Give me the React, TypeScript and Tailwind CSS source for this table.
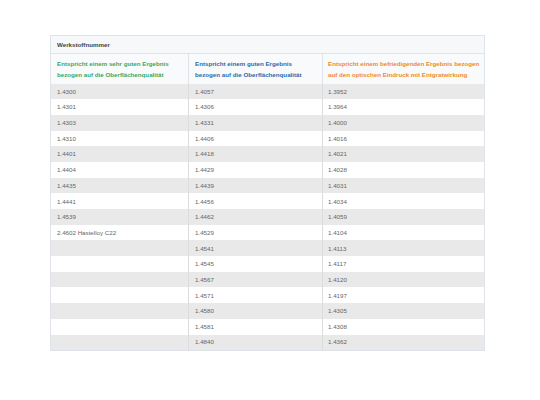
import React from "react";

const rows: [string, string, string][] = [
    ["1.4300", "1.4057", "1.3952"],
    ["1.4301", "1.4306", "1.3964"],
    ["1.4303", "1.4331", "1.4000"],
    ["1.4310", "1.4406", "1.4016"],
    ["1.4401", "1.4418", "1.4021"],
    ["1.4404", "1.4429", "1.4028"],
    ["1.4435", "1.4439", "1.4031"],
    ["1.4441", "1.4456", "1.4034"],
    ["1.4539", "1.4462", "1.4059"],
    ["2.4602 Hastelloy C22", "1.4529", "1.4104"],
    ["", "1.4541", "1.4113"],
    ["", "1.4545", "1.4117"],
    ["", "1.4567", "1.4120"],
    ["", "1.4571", "1.4197"],
    ["", "1.4580", "1.4305"],
    ["", "1.4581", "1.4308"],
    ["", "1.4840", "1.4362"],
];

export default function App() {
    return (
        <div
            className="w-[540px] h-[400px] bg-white pt-[35px] pl-[50px]"
            style={{ fontFamily: '"Liberation Sans", Arial, sans-serif' }}
        >
            <table className="w-[434px] border-collapse border border-[#dfe4ea] text-[6.2px] table-fixed">
                <colgroup>
                    <col className="w-[138px]" />
                    <col className="w-[134px]" />
                    <col className="w-[162px]" />
                </colgroup>
                <thead>
                    <tr className="h-[18px] bg-[#f6f8fa] border-b border-[#dfe4ea]">
                        <th colSpan={3} className="text-left font-bold text-[#444] px-[6px]">
                            Werkstoffnummer
                        </th>
                    </tr>
                    <tr className="h-[30px] bg-[#f8fafc] font-bold leading-[11px] whitespace-nowrap">
                        <th className="text-left text-[#3aa95c] px-[6px] font-bold">
                            Entspricht einem sehr guten Ergebnis
                            <br />
                            bezogen auf die Oberflächenqualität
                        </th>
                        <th className="text-left text-[#2d6aa6] px-[6px] font-bold border-l border-[#dfe4ea]">
                            Entspricht einem guten Ergebnis
                            <br />
                            bezogen auf die Oberflächenqualität
                        </th>
                        <th className="text-left text-[#f0892a] px-[5px] font-bold border-l border-[#dfe4ea]">
                            Entspricht einem befriedigenden Ergebnis bezogen
                            <br />
                            auf den optischen Eindruck mit Entgratwirkung
                        </th>
                    </tr>
                </thead>
                <tbody>
                    {rows.map((r, i) => (
                        <tr
                            key={i}
                            className={`h-[15.7px] text-[#666] ${i % 2 === 0 ? "bg-[#e9e9e9]" : "bg-white"}`}
                        >
                            <td className="px-[6px]">{r[0]}</td>
                            <td className="px-[6px] border-l border-[#dcdcdc]">{r[1]}</td>
                            <td className="px-[5px] border-l border-[#dcdcdc]">{r[2]}</td>
                        </tr>
                    ))}
                </tbody>
            </table>
        </div>
    );
}
